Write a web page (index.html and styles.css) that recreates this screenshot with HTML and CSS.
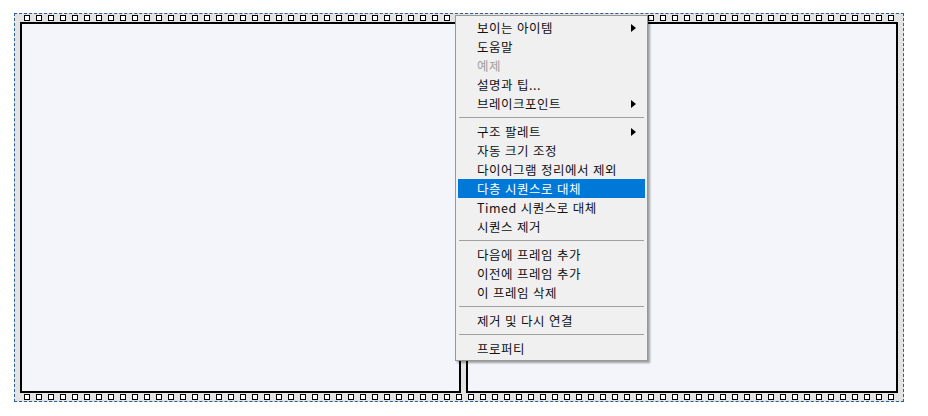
FILE: index.html
```html
<!DOCTYPE html>
<html lang="ko">
<head>
  <meta charset="UTF-8">
  <title>플랫 시퀀스</title>
  <link rel="stylesheet" href="styles.css">
</head>
<body>
  <div class="sequence">
    <div class="strip" id="strip-top"></div>
    <div class="frames">
      <div class="frame frame-left"></div>
      <div class="frame frame-right"></div>
    </div>
    <div class="strip" id="strip-bottom"></div>
  </div>

  <div class="menu">
    <div class="item has-sub">보이는 아이템</div>
    <div class="item">도움말</div>
    <div class="item disabled">예제</div>
    <div class="item">설명과 팁...</div>
    <div class="item has-sub">브레이크포인트</div>
    <div class="sep"></div>
    <div class="item has-sub">구조 팔레트</div>
    <div class="item">자동 크기 조정</div>
    <div class="item">다이어그램 정리에서 제외</div>
    <div class="item active">다층 시퀀스로 대체</div>
    <div class="item">Timed 시퀀스로 대체</div>
    <div class="item">시퀀스 제거</div>
    <div class="sep"></div>
    <div class="item">다음에 프레임 추가</div>
    <div class="item">이전에 프레임 추가</div>
    <div class="item">이 프레임 삭제</div>
    <div class="sep"></div>
    <div class="item">제거 및 다시 연결</div>
    <div class="sep"></div>
    <div class="item">프로퍼티</div>
  </div>

  <script>
    // 필름 구멍 채우기
    ['strip-top', 'strip-bottom'].forEach(function (id) {
      var strip = document.getElementById(id);
      for (var i = 0; i < 73; i++) {
        var hole = document.createElement('span');
        hole.className = 'hole';
        strip.appendChild(hole);
      }
    });
  </script>
</body>
</html>
```

FILE: styles.css
```css
/* 시퀀스 구조 + 단축 메뉴 */
body {
  margin: 0;
  background-color: #fff;
  font-family: "Noto Sans CJK KR", "Noto Sans", sans-serif;
  font-size: 12px;
}
.sequence {
  margin: 13px 0 0 14px;
  width: 890px;
  height: 389px;
  box-sizing: border-box;
  border: 1px dashed #2b5f94;
  background-color: #e3e3e3;
  display: flex;
  flex-direction: column;
}
.strip {
  height: 8px;
  display: flex;
  align-items: center;
  gap: 6px;
  padding-left: 9px;
  overflow: hidden;
}
.hole {
  flex: none;
  width: 6px;
  height: 6px;
  box-sizing: border-box;
  border: 1px solid #000;
  background-color: #fff;
}
.frames {
  flex: 1;
  display: flex;
  gap: 5px;
  padding: 0 5px;
}
.frame {
  box-sizing: border-box;
  border: 2px solid #000;
  background-color: #f4f5fa;
}
.frame-left {
  width: 441px;
}
.frame-right {
  flex: 1;
}
.menu {
  position: absolute;
  left: 455px;
  top: 15px;
  width: 193px;
  box-sizing: border-box;
  padding: 2px;
  background-color: #f0f0f0;
  border: 1px solid #979797;
  box-shadow: 2px 2px 2px rgba(0, 0, 0, 0.35);
}
.item {
  position: relative;
  height: 19px;
  line-height: 19px;
  padding-left: 19px;
  font-size: 12.5px;
  letter-spacing: 0.5px;
  color: #111;
  white-space: nowrap;
}
.item.disabled {
  color: #a0a0a0;
}
.item.active {
  background-color: #0078d7;
  color: #fff;
}
.item.has-sub::after {
  content: "";
  position: absolute;
  right: 9px;
  top: 6px;
  border-style: solid;
  border-width: 4px 0 4px 5px;
  border-color: transparent transparent transparent #000;
}
.sep {
  height: 9px;
  display: flex;
  align-items: center;
  padding: 0 1px;
}
.sep::before {
  content: "";
  flex: 1;
  border-top: 1px solid #a0a0a0;
}
```
